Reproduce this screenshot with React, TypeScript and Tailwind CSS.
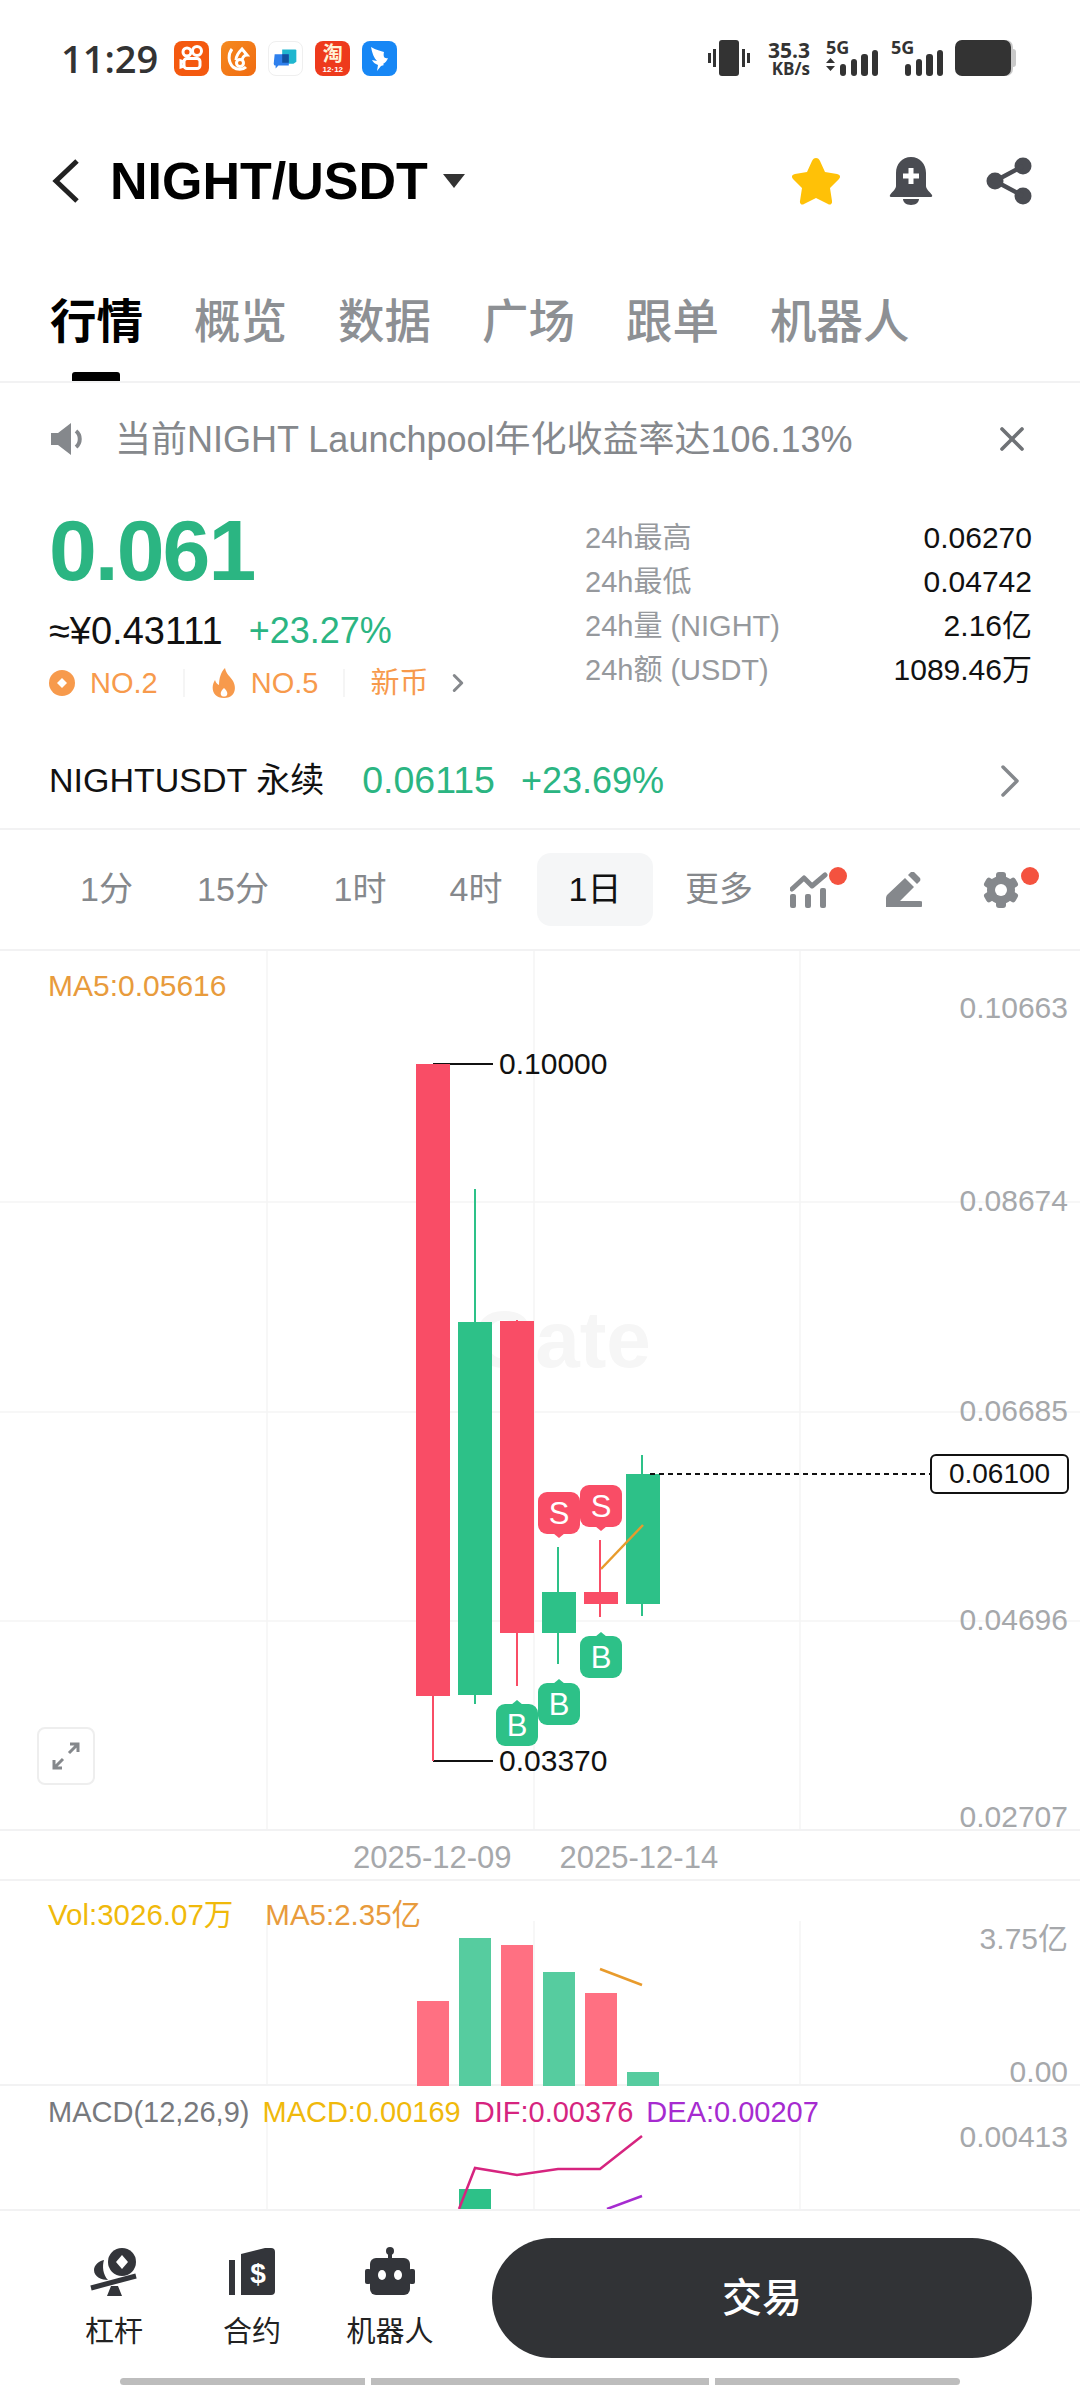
import { ChevronRight, X } from "lucide-react";

const sans = "font-['Liberation_Sans','Noto_Sans_CJK_SC',sans-serif]";

const tabs = ["行情", "概览", "数据", "广场", "跟单", "机器人"];
const stats = [
  { label: "24h最高", value: "0.06270" },
  { label: "24h最低", value: "0.04742" },
  { label: "24h量 (NIGHT)", value: "2.16亿" },
  { label: "24h额 (USDT)", value: "1089.46万" },
];
const intervals = [
  { label: "1分", w: "w-[115px]" },
  { label: "15分", w: "w-[138px]" },
  { label: "1时", w: "w-[116px]" },
  { label: "4时", w: "w-[116px]" },
];

const RED = "#f94d66";
const GREEN = "#2dc188";

// page coordinates, the svgs use a viewBox offset to match
const candles = [
  { x: 416, top: 1064, bottom: 1696, wickTop: 1064, wickBottom: 1761, color: RED, wickX: 433 },
  { x: 458, top: 1322, bottom: 1695, wickTop: 1189, wickBottom: 1704, color: GREEN, wickX: 475 },
  { x: 500, top: 1321, bottom: 1633, wickTop: 1320, wickBottom: 1686, color: RED, wickX: 517 },
  { x: 542, top: 1592, bottom: 1633, wickTop: 1547, wickBottom: 1664, color: GREEN, wickX: 558 },
  { x: 584, top: 1592, bottom: 1604, wickTop: 1540, wickBottom: 1617, color: RED, wickX: 600 },
  { x: 626, top: 1474, bottom: 1604, wickTop: 1455, wickBottom: 1616, color: GREEN, wickX: 642 },
];

const marks = [
  { kind: "S", x: 538, y: 1492 },
  { kind: "S", x: 580, y: 1485 },
  { kind: "B", x: 496, y: 1704 },
  { kind: "B", x: 538, y: 1683 },
  { kind: "B", x: 580, y: 1636 },
];

const volBars = [
  { x: 417, top: 2001, color: "#ff7082" },
  { x: 459, top: 1938, color: "#56cc9f" },
  { x: 501, top: 1945, color: "#ff7082" },
  { x: 543, top: 1972, color: "#56cc9f" },
  { x: 585, top: 1993, color: "#ff7082" },
  { x: 627, top: 2072, color: "#56cc9f" },
];

function GridLines({ top, bottom }: { top: number; bottom: number }) {
  return (
    <>
      {[267, 534, 800].map((x) => (
        <line key={x} x1={x} x2={x} y1={top} y2={bottom} stroke="#f4f4f5" strokeWidth="1.5" />
      ))}
    </>
  );
}

function AppIcons() {
  return (
    <div className="ml-[16px] flex gap-[12px]">
      <div className="h-[35px] w-[35px] overflow-hidden rounded-[8px] bg-[#f4590f]">
        <svg viewBox="0 0 35 35" className="h-full w-full" fill="none" stroke="#fff" strokeWidth="3">
          <circle cx="13" cy="11" r="4" />
          <circle cx="23" cy="10" r="4.5" />
          <rect x="10" y="17.5" width="16" height="10" rx="3" />
          <path d="M10 21l-3 -1v6l3 -1" />
        </svg>
      </div>
      <div className="h-[35px] w-[35px] overflow-hidden rounded-[8px] bg-gradient-to-br from-[#f58a1f] to-[#f06a10]">
        <svg viewBox="0 0 35 35" className="h-full w-full" fill="none" stroke="#fff" strokeWidth="3">
          <path d="M11 8c-4 5 -4 13 1 18c4 3 10 3 13 0" />
          <path d="M15 19c0 -5 4 -9 6 -11l5 6c-3 0 -5 3 -5 6" />
          <circle cx="19" cy="22" r="3.5" />
        </svg>
      </div>
      <div className="h-[35px] w-[35px] overflow-hidden rounded-[8px] border border-[#efefef] bg-white">
        <svg viewBox="0 0 35 35" className="h-full w-full">
          <path d="M14 8h14a1 1 0 0 1 1 1v12l-3 2h-12z" fill="#1fb6cf" />
          <path d="M6 13h14a1 1 0 0 1 1 1v11h-11l-3 3v-3a2 2 0 0 1 -2 -2z" fill="#2f80ed" />
          <path d="M14 13h7v9h-7z" fill="#12529f" />
        </svg>
      </div>
      <div className="flex h-[35px] w-[35px] flex-col items-center rounded-[8px] bg-[#ee3a1c]">
        <span className="text-[20px] leading-[24px] font-bold text-[#fff3d6] font-['Noto_Sans_CJK_SC',sans-serif]">淘</span>
        <span className="text-[8px] leading-[9px] font-bold text-white font-['Liberation_Sans',sans-serif]">12·12</span>
      </div>
      <div className="h-[35px] w-[35px] overflow-hidden rounded-[8px] bg-[#1787f5]">
        <svg viewBox="0 0 35 35" className="h-full w-full">
          <path d="M9 6c5 3 10 4 13 5c-1 4 0 7 4 6c-1 3 -3 5 -5 6l1 1l-3 1l-4 5l1 -6c-3 -1 -5 -3 -6 -5l5 1c-3 -3 -5 -8 -6 -14z" fill="#fff" />
        </svg>
      </div>
    </div>
  );
}

function SignalBars({ lead }: { lead?: boolean }) {
  return (
    <div className="relative h-[36px] w-[54px]">
      <span className="absolute top-[-3px] left-0 text-[18px] leading-[20px] font-bold text-[#333] font-['Open_Sans',sans-serif]">5G</span>
      <svg viewBox="0 0 54 36" className="h-[36px] w-[54px]">
        {lead && <path d="M0 23l4.5 -5l4.5 5zM0 26l4.5 5l4.5 -5z" fill="#333" />}
        <rect x="14" y="24" width="6" height="12" rx="3" fill="#333" />
        <rect x="25" y="19" width="6" height="17" rx="3" fill="#333" />
        <rect x="35" y="14" width="7" height="22" rx="3" fill="#333" />
        <rect x="46" y="10" width="6" height="26" rx="3" fill="#333" />
      </svg>
    </div>
  );
}

function StatusBar() {
  return (
    <div className="flex h-[116px] items-center justify-between pl-[61px] pr-[64px]">
      <div className="flex items-center">
        <span className="text-[38px] leading-none font-semibold text-[#333] font-['Open_Sans',sans-serif]">11:29</span>
        <AppIcons />
      </div>
      <div className="flex items-center">
        <svg viewBox="0 0 42 36" className="h-[36px] w-[42px]" fill="#333">
          <rect x="11" y="0" width="20" height="36" rx="3" />
          <rect x="0" y="13" width="3" height="10" />
          <rect x="5" y="9" width="3" height="18" />
          <rect x="34" y="9" width="3" height="18" />
          <rect x="39" y="13" width="3" height="10" />
        </svg>
        <div className="ml-[12px] flex w-[48px] flex-col items-end font-['Open_Sans',sans-serif] font-bold text-[#333]">
          <span className="text-[21px] leading-[21px] whitespace-nowrap">35.3</span>
          <span className="text-[17px] leading-[16px] whitespace-nowrap">KB/s</span>
        </div>
        <div className="ml-[16px]">
          <SignalBars lead />
        </div>
        <div className="ml-[11px]">
          <SignalBars />
        </div>
        <div className="ml-[10px] flex items-center">
          <div className="h-[36px] w-[56px] rounded-[7px] bg-[#333] shadow-[2px_0_0_#c9c9c9]" />
          <div className="ml-[2px] h-[18px] w-[3px] rounded-r bg-[#c9c9c9]" />
        </div>
      </div>
    </div>
  );
}

function Header() {
  return (
    <div className="flex h-[130px] items-center justify-between pl-[52px] pr-[48px]">
      <div className="flex items-center">
        <svg viewBox="0 0 28 44" className="h-[44px] w-[28px]" fill="none" stroke="#222" strokeWidth="5">
          <path d="M25 2L4 22L25 42" />
        </svg>
        <span className={`ml-[30px] text-[52px] leading-none font-bold text-black ${sans}`}>NIGHT/USDT</span>
        <svg viewBox="0 0 24 16" className="ml-[14px] h-[16px] w-[24px]">
          <path d="M1 1h22l-11 14z" fill="#333" />
        </svg>
      </div>
      <div className="flex items-center">
        <svg viewBox="0 0 50 48" className="h-[48px] w-[50px]">
          <path
            d="M25 1c2 0 3 1 4 3l5 11l12 2c3 .5 4 3 2 5l-9 9l2 13c.5 3 -2 4.500 -4 3l-12 -6l-12 6c-2 1.500 -4.500 0 -4 -3l2 -13l-9 -9c-2 -2 -1 -4.500 2 -5l12 -2l5 -11c1 -2 2 -3 4 -3z"
            fill="#ffc107"
          />
        </svg>
        <svg viewBox="0 0 44 48" className="ml-[48px] h-[48px] w-[44px]">
          <path d="M22 0c9 0 15 7 15 16v13c0 3 3 5 6 9c.5 1 0 2 -1 2h-40c-1 0 -1.500 -1 -1 -2c3 -4 6 -6 6 -9v-13c0 -9 6 -16 15 -16z" fill="#4a4c52" />
          <path d="M14 42h16c0 3 -3 6 -8 6s-8 -3 -8 -6z" fill="#4a4c52" />
          <path d="M19.500 11h5v5.500h5.500v5h-5.500v5.500h-5v-5.500h-5.500v-5h5.500z" fill="#fff" />
        </svg>
        <svg viewBox="0 0 46 48" className="ml-[53px] h-[48px] w-[46px]" fill="#4a4c52">
          <circle cx="37" cy="9" r="8.500" />
          <circle cx="9" cy="24" r="8.500" />
          <circle cx="37" cy="39" r="8.500" />
          <path d="M37 9L9 24L37 39" fill="none" stroke="#4a4c52" strokeWidth="4.500" />
        </svg>
      </div>
    </div>
  );
}

function Tabs() {
  return (
    <div className="relative h-[137px] border-b-2 border-[#f2f2f3] pl-[50px] pt-[51px]">
      <div className={`flex gap-[51px] text-[46.5px] leading-[50px] font-medium text-[#8d9094] ${sans}`}>
        {tabs.map((tab, i) => (
          <span key={tab} className={i === 0 ? "font-bold text-black" : ""}>
            {tab}
          </span>
        ))}
      </div>
      <div className="absolute bottom-0 left-[72px] h-[9px] w-[48px] rounded-t-[3px] bg-black" />
    </div>
  );
}

function Notice() {
  return (
    <div className="flex h-[112px] items-center pl-[51px] pr-[48px]">
      <svg viewBox="0 0 36 32" className="h-[32px] w-[36px]">
        <path d="M0 10h7l13 -10v32l-13 -10h-7z" fill="#85888c" />
        <path d="M25 8c5 4 5 12 0 16" fill="none" stroke="#85888c" strokeWidth="4" />
      </svg>
      <span className={`ml-[28px] mt-[2px] flex-1 text-[36px] leading-none whitespace-nowrap text-[#85888c] ${sans}`}>
        当前NIGHT Launchpool年化收益率达106.13%
      </span>
      <X className="h-[40px] w-[40px] text-[#6f7276]" strokeWidth={2.2} />
    </div>
  );
}

function PriceBlock() {
  return (
    <div className="flex h-[238px] justify-between pl-[49px] pr-[48px]">
      <div className="flex w-[420px] flex-col">
        <span className={`mt-[12px] text-[86px] leading-[86px] font-bold tracking-[-2px] text-[#2bb582] ${sans}`}>0.061</span>
        <div className={`mt-[18px] flex items-center leading-[40px] ${sans}`}>
          <span className="text-[38px] text-[#111]">≈¥0.43111</span>
          <span className="ml-[26px] text-[36px] text-[#2bb582]">+23.27%</span>
        </div>
        <div className={`mt-[12px] flex items-center text-[29px] leading-[40px] whitespace-nowrap text-[#f79a4c] ${sans}`}>
          <svg viewBox="0 0 26 26" className="h-[26px] w-[26px] shrink-0">
            <circle cx="13" cy="13" r="13" fill="#f79a4c" />
            <path d="M13 8l5 5l-5 5l-5 -5z" fill="#fff" />
          </svg>
          <span className="ml-[15px]">NO.2</span>
          <div className="ml-[25px] h-[28px] w-[2px] shrink-0 bg-[#f5f5f5]" />
          <svg viewBox="0 0 26 30" className="ml-[26px] h-[30px] w-[26px] shrink-0">
            <path d="M14 0c1 6 5 8 8 13c4 7 2 17 -9 17c-11 0 -14 -10 -9 -18c1 3 2 4 4 5c0 -7 2 -13 6 -17z" fill="#f79a4c" />
            <path d="M13 20c2 2 4 4 3 7c-1 2 -5 2 -6 0c-1 -3 1 -5 3 -7z" fill="#fff" />
          </svg>
          <span className="ml-[14px]">NO.5</span>
          <div className="ml-[25px] h-[28px] w-[2px] shrink-0 bg-[#f5f5f5]" />
          <span className="ml-[25px]">新币</span>
          <ChevronRight className="ml-[15px] h-[30px] w-[30px] shrink-0 text-[#85888c]" strokeWidth={2.4} />
        </div>
      </div>
      <div className={`mt-[21px] flex w-[447px] flex-col text-[29px] leading-[44px] ${sans}`}>
        {stats.map((row) => (
          <div key={row.label} className="flex justify-between">
            <span className="text-[#96999d]">{row.label}</span>
            <span className="text-[30px] text-[#111]">{row.value}</span>
          </div>
        ))}
      </div>
    </div>
  );
}

function PerpRow() {
  return (
    <div className={`flex h-[97px] items-center border-b-2 border-[#f2f2f3] pl-[49px] pr-[42px] text-[34px] ${sans}`}>
      <span className="text-[#111]">NIGHTUSDT 永续</span>
      <span className="ml-[38px] text-[37.5px] text-[#2bb582]">0.06115</span>
      <span className="ml-[26px] text-[36px] text-[#2bb582]">+23.69%</span>
      <ChevronRight className="ml-auto h-[56px] w-[56px] text-[#85888c]" strokeWidth={1.5} />
    </div>
  );
}

function IntervalBar() {
  return (
    <div className={`flex h-[121px] items-center border-b-2 border-[#f2f2f3] pl-[49px] text-[34px] text-[#85888c] ${sans}`}>
      {intervals.map((item) => (
        <span key={item.label} className={`${item.w} text-center`}>
          {item.label}
        </span>
      ))}
      <span className="ml-[3px] flex h-[73px] w-[116px] items-center justify-center rounded-[14px] bg-[#f5f6f7] text-[#111]">1日</span>
      <span className="ml-[32px]">更多</span>
      <div className="relative ml-[37px] h-[36px] w-[46px]">
        <svg viewBox="0 0 46 36" className="h-full w-full">
          <path d="M2 17L14 6L22 14L35 3" fill="none" stroke="#85888c" strokeWidth="5" strokeLinecap="round" strokeLinejoin="round" />
          <rect x="0" y="22" width="6" height="14" rx="2" fill="#85888c" />
          <rect x="15" y="22" width="6" height="14" rx="2" fill="#85888c" />
          <rect x="30" y="16" width="6" height="20" rx="2" fill="#85888c" />
        </svg>
        <div className="absolute -top-[5px] -right-[11px] h-[18px] w-[18px] rounded-full bg-[#f4523f]" />
      </div>
      <svg viewBox="0 0 36 36" className="ml-[50px] h-[36px] w-[36px]" fill="#85888c">
        <path d="M0 35v-9c0 -1 .5 -2 1 -3l18 -17l9 9l-14 14h20a3 3 0 0 1 0 6h-32c-1 0 -2 0 -2 0z" />
        <path d="M22 3l3 -3c1 -.5 2 -.5 3 0l6 6c.5 1 .5 2 0 3l-3 3z" />
      </svg>
      <div className="relative ml-[61px] h-[36px] w-[36px]">
        <svg viewBox="0 0 36 36" className="h-full w-full" fill="#85888c">
          {[0, 60, 120, 180, 240, 300].map((deg) => (
            <rect key={deg} x="13" y="0" width="10" height="10" rx="3" transform={`rotate(${deg} 18 18)`} />
          ))}
          <circle cx="18" cy="18" r="14" />
          <circle cx="18" cy="18" r="6" fill="#fff" />
        </svg>
        <div className="absolute -top-[5px] -right-[20px] h-[18px] w-[18px] rounded-full bg-[#f4523f]" />
      </div>
    </div>
  );
}

function AxisLabel({ y, children }: { y: number; children: string }) {
  return (
    <span
      className="absolute right-[12px] -translate-y-1/2 text-[30px] leading-none text-[#a6a8ab]"
      style={{ top: y }}
    >
      {children}
    </span>
  );
}

function PriceChart() {
  return (
    <div className={`relative h-[880px] border-b-2 border-[#f2f2f3] ${sans}`}>
      <span className="absolute top-[349px] left-[473px] text-[80px] leading-none font-bold text-[#f6f6f6]">Gate</span>
      <svg viewBox="0 951 1080 878" className="absolute inset-0 h-[878px] w-[1080px]">
        <GridLines top={951} bottom={1830} />
        {[1202, 1412, 1621].map((y) => (
          <line key={y} x1="0" x2="1080" y1={y} y2={y} stroke="#f4f4f5" strokeWidth="1.5" />
        ))}
        <path d="M433 1064H493M433 1761H493" stroke="#111" strokeWidth="2" fill="none" />
        {candles.map((c) => (
          <g key={c.x}>
            <line x1={c.wickX} x2={c.wickX} y1={c.wickTop} y2={c.wickBottom} stroke={c.color} strokeWidth="2" />
            <rect x={c.x} y={c.top} width="34" height={c.bottom - c.top} fill={c.color} />
          </g>
        ))}
        <line x1="601" y1="1569" x2="643" y2="1525" stroke="#e89b2c" strokeWidth="2.500" />
        <line x1="650" y1="1474" x2="930" y2="1474" stroke="#111" strokeWidth="2" strokeDasharray="5 4" />
        {marks.map((m) =>
          m.kind === "S" ? (
            <g key={m.x + m.kind}>
              <path d={`M${m.x + 15} ${m.y + 41}l6 5l6 -5z`} fill={RED} />
              <rect x={m.x} y={m.y} width="42" height="42" rx="9" fill={RED} />
            </g>
          ) : (
            <g key={m.x + m.kind}>
              <path d={`M${m.x + 15} ${m.y + 1}l6 -5l6 5z`} fill={GREEN} />
              <rect x={m.x} y={m.y} width="42" height="42" rx="9" fill={GREEN} />
            </g>
          ),
        )}
      </svg>
      <span className="absolute top-[20px] left-[48px] text-[30px] leading-none text-[#e89b3c]">MA5:0.05616</span>
      <AxisLabel y={57}>0.10663</AxisLabel>
      <AxisLabel y={250}>0.08674</AxisLabel>
      <AxisLabel y={460}>0.06685</AxisLabel>
      <AxisLabel y={669}>0.04696</AxisLabel>
      <AxisLabel y={866}>0.02707</AxisLabel>
      <span className="absolute top-[98px] left-[499px] text-[30px] leading-none text-[#111]">0.10000</span>
      <span className="absolute top-[795px] left-[499px] text-[30px] leading-none text-[#111]">0.03370</span>
      {marks.map((m) => (
        <span
          key={m.x + m.kind + "t"}
          className="absolute flex h-[42px] w-[42px] items-center justify-center text-[31px] leading-none text-white"
          style={{ left: m.x, top: m.y - 951 }}
        >
          {m.kind}
        </span>
      ))}
      <div className="absolute top-[503px] left-[930px] flex h-[40px] w-[139px] items-center justify-center rounded-[6px] border-2 border-[#111] bg-white text-[28px] text-[#111]">
        0.06100
      </div>
      <div className="absolute top-[776px] left-[37px] flex h-[58px] w-[58px] items-center justify-center rounded-[8px] border-2 border-[#eeeeee] bg-white">
        <svg viewBox="0 0 30 30" className="h-[30px] w-[30px]" fill="none" stroke="#85888c" strokeWidth="3">
          <path d="M18 12L27 3M19 3h8v8M12 18L3 27M3 19v8h8" />
        </svg>
      </div>
    </div>
  );
}

function DateAxis() {
  return (
    <div className={`flex h-[50px] items-center border-b-2 border-[#f2f2f3] pt-[6px] pl-[353px] text-[31px] text-[#a6a8ab] ${sans}`}>
      <span>2025-12-09</span>
      <span className="ml-[48px]">2025-12-14</span>
    </div>
  );
}

function VolumePanel() {
  return (
    <div className={`relative h-[205px] ${sans}`}>
      <svg viewBox="0 1881 1080 205" className="absolute inset-0 h-[205px] w-[1080px]">
        <GridLines top={1921} bottom={2086} />
        <line x1="0" x2="1080" y1="2085" y2="2085" stroke="#f2f2f3" strokeWidth="2" />
        {volBars.map((b) => (
          <rect key={b.x} x={b.x} y={b.top} width="32" height={2086 - b.top} fill={b.color} />
        ))}
        <line x1="600" y1="1969" x2="642" y2="1985" stroke="#e89b2c" strokeWidth="2.500" />
      </svg>
      <div className="absolute top-[19px] left-[48px] flex gap-[32px] text-[29.5px] leading-[30px] whitespace-nowrap">
        <span className="text-[#f0b90b]">Vol:3026.07万</span>
        <span className="text-[#e89b3c]">MA5:2.35亿</span>
      </div>
      <AxisLabel y={58}>3.75亿</AxisLabel>
      <AxisLabel y={191}>0.00</AxisLabel>
    </div>
  );
}

function MacdPanel() {
  return (
    <div className={`relative h-[123px] overflow-hidden ${sans}`}>
      <svg viewBox="0 2086 1080 123" className="absolute inset-0 h-[123px] w-[1080px]">
        <GridLines top={2120} bottom={2209} />
        <rect x="459" y="2189" width="32" height="20" fill={GREEN} />
        <path d="M459 2209L475 2168L517 2175L558 2169L600 2169L642 2136" fill="none" stroke="#d6247f" strokeWidth="2.500" />
        <path d="M607 2209L642 2196" fill="none" stroke="#a62bd0" strokeWidth="2.500" />
      </svg>
      <div className="absolute top-[11px] left-[48px] flex gap-[13px] text-[29px] leading-[30px] whitespace-nowrap">
        <span className="text-[#77797d]">MACD(12,26,9)</span>
        <span className="text-[#f0b90b]">MACD:0.00169</span>
        <span className="text-[#d6247f]">DIF:0.00376</span>
        <span className="text-[#a62bd0]">DEA:0.00207</span>
      </div>
      <AxisLabel y={51}>0.00413</AxisLabel>
    </div>
  );
}

function BottomBar() {
  return (
    <div className={`relative h-[179px] border-t-2 border-[#f2f2f3] bg-white ${sans}`}>
      <div className="flex h-[174px] items-center pl-[60px] pr-[48px]">
        <div className="flex w-[108px] flex-col items-center">
          <svg viewBox="0 0 50 50" className="h-[50px] w-[50px]" fill="#33353a">
            <circle cx="33" cy="15" r="14" />
            <path d="M33 8l6 7l-6 7l-6 -7z" fill="#fff" />
            <path d="M15 13c-2 6 -1 15 4 20c-6 0 -14 -3 -14 -10c0 -5 5 -9 10 -10z" />
            <path d="M2 41L47 29" stroke="#33353a" strokeWidth="5" />
            <path d="M22 39h7l4 10h-15z" />
          </svg>
          <span className="mt-[18px] text-[29px] leading-[34px] whitespace-nowrap text-[#222]">杠杆</span>
        </div>
        <div className="ml-[30px] flex w-[108px] flex-col items-center">
          <svg viewBox="0 0 46 50" className="h-[50px] w-[46px]" fill="#33353a">
            <rect x="0" y="13" width="6" height="35" />
            <path d="M12 7l24 -6h6a4 4 0 0 1 4 4v39a4 4 0 0 1 -4 4h-30z" />
            <text x="29" y="36" textAnchor="middle" fontSize="28" fontWeight="700" fill="#fff">$</text>
          </svg>
          <span className="mt-[18px] text-[29px] leading-[34px] whitespace-nowrap text-[#222]">合约</span>
        </div>
        <div className="ml-[30px] flex w-[108px] flex-col items-center">
          <svg viewBox="0 0 50 50" className="h-[50px] w-[50px]" fill="#33353a">
            <circle cx="25" cy="4" r="4" />
            <rect x="23" y="5" width="4" height="8" />
            <rect x="5" y="11" width="40" height="37" rx="6" />
            <rect x="0" y="22" width="6" height="15" rx="2" />
            <rect x="44" y="22" width="6" height="15" rx="2" />
            <ellipse cx="17" cy="28" rx="4" ry="5" fill="#fff" />
            <ellipse cx="33" cy="28" rx="4" ry="5" fill="#fff" />
          </svg>
          <span className="mt-[18px] text-[29px] leading-[34px] whitespace-nowrap text-[#222]">机器人</span>
        </div>
        <button className="ml-[48px] flex h-[120px] flex-1 items-center justify-center rounded-full bg-[#313336] text-[40px] font-medium text-white">
          交易
        </button>
      </div>
      <div className="absolute bottom-[3px] left-[120px] flex gap-[6px]">
        <div className="h-[7px] w-[245px] rounded-l-full bg-[#bdbdbd]" />
        <div className="h-[7px] w-[338px] bg-[#bdbdbd]" />
        <div className="h-[7px] w-[245px] rounded-r-full bg-[#bdbdbd]" />
      </div>
    </div>
  );
}

export default function App() {
  return (
    <div className="h-[2388px] w-[1080px] overflow-hidden bg-white">
      <StatusBar />
      <Header />
      <Tabs />
      <Notice />
      <PriceBlock />
      <PerpRow />
      <IntervalBar />
      <PriceChart />
      <DateAxis />
      <VolumePanel />
      <MacdPanel />
      <BottomBar />
    </div>
  );
}
